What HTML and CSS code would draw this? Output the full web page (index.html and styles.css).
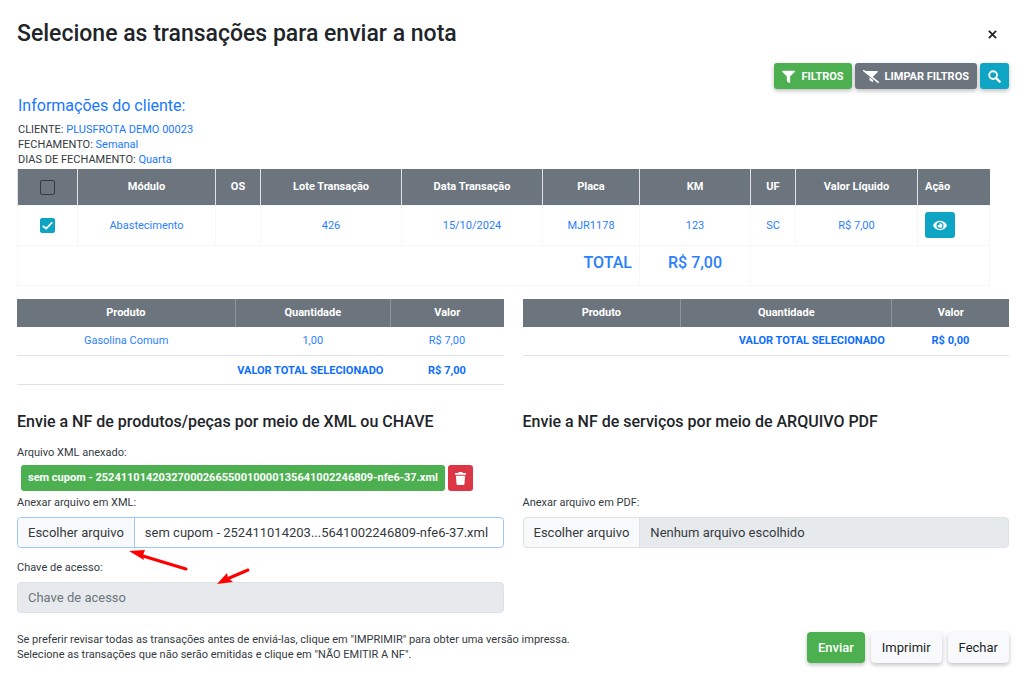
FILE: index.html
```html
<!DOCTYPE html>
<html lang="pt-BR">
<head>
  <meta charset="UTF-8">
  <meta name="viewport" content="width=device-width, initial-scale=1.0">
  <title>Enviar nota</title>
  <link rel="stylesheet" href="styles.css">
</head>
<body>
  <header class="modal-header">
    <h1>Selecione as transações para enviar a nota</h1>
    <button type="button" class="close" aria-label="Fechar janela">
      <svg viewBox="0 0 10 10" width="9" height="9"><path d="M1 1l8 8M9 1L1 9" stroke="#212529" stroke-width="2"/></svg>
    </button>
  </header>

  <div class="toolbar">
    <button type="button" class="btn-sm green shadow">
      <svg viewBox="0 0 512 512" width="13" height="13"><path fill="#fff" d="M488 32H24C3 32-8 58 7 73l185 185v174c0 8 4 15 10 20l80 56c16 11 38 0 38-20V258L505 73c15-15 4-41-17-41z"/></svg>
      FILTROS
    </button>
    <button type="button" class="btn-sm gray shadow">
      <svg viewBox="0 0 16 13" width="16" height="13"><path fill="#fff" d="M2 1h12c.8 0 1 .7.5 1.200L10 6.700v5.600l-3.500-2V6.700z"/><path d="M1 2l14 11" stroke="#6c757d" stroke-width="1.500"/><path d="M.7.700l14.600 11.600" stroke="#fff" stroke-width="1.500" stroke-linecap="round"/></svg>
      LIMPAR FILTROS
    </button>
    <button type="button" class="btn-sm teal shadow" aria-label="Pesquisar">
      <svg viewBox="0 0 14 14" width="13" height="13"><circle cx="5.500" cy="5.500" r="4.200" fill="none" stroke="#fff" stroke-width="2"/><path d="M8.500 8.500l4 4" stroke="#fff" stroke-width="2.500" stroke-linecap="round"/></svg>
    </button>
  </div>

  <main>
    <section class="client">
      <h2>Informações do cliente:</h2>
      <p>CLIENTE: <span>PLUSFROTA DEMO 00023</span></p>
      <p>FECHAMENTO: <span>Semanal</span></p>
      <p>DIAS DE FECHAMENTO: <span>Quarta</span></p>
    </section>

    <div class="table-wrap">
      <table class="transactions">
        <colgroup>
          <col class="c-check"><col class="c-modulo"><col class="c-os"><col class="c-lote"><col class="c-data">
          <col class="c-placa"><col class="c-km"><col class="c-uf"><col class="c-valor"><col class="c-acao">
        </colgroup>
        <thead>
          <tr>
            <th><input type="checkbox" class="check" aria-label="Selecionar todas"></th>
            <th>Módulo</th>
            <th>OS</th>
            <th>Lote Transação</th>
            <th>Data Transação</th>
            <th>Placa</th>
            <th>KM</th>
            <th>UF</th>
            <th>Valor Líquido</th>
            <th class="left">Ação</th>
          </tr>
        </thead>
        <tbody>
          <tr>
            <td><input type="checkbox" class="check" aria-label="Selecionar transação 426" checked></td>
            <td>Abastecimento</td>
            <td></td>
            <td>426</td>
            <td>15/10/2024</td>
            <td>MJR1178</td>
            <td>123</td>
            <td>SC</td>
            <td>R$ 7,00</td>
            <td class="left">
              <button type="button" class="btn-sm teal" aria-label="Visualizar">
                <svg viewBox="0 0 576 512" width="14" height="13"><path fill="#fff" d="M572 241C518 136 411 64 288 64S58 136 4 241a32 32 0 0 0 0 29c54 106 161 178 284 178s230-72 284-178a32 32 0 0 0 0-29zM288 400a144 144 0 1 1 0-288 144 144 0 0 1 0 288zm0-240a95 95 0 0 0-25 4 48 48 0 0 1-67 67 96 96 0 1 0 92-71z"/></svg>
              </button>
            </td>
          </tr>
          <tr class="total">
            <td colspan="6" class="right">TOTAL</td>
            <td>R$ 7,00</td>
            <td colspan="3"></td>
          </tr>
        </tbody>
      </table>
    </div>

    <div class="columns summaries">
      <table class="summary">
        <colgroup><col class="p-produto"><col class="p-qtd"><col class="p-valor"></colgroup>
        <thead>
          <tr><th>Produto</th><th>Quantidade</th><th>Valor</th></tr>
        </thead>
        <tbody>
          <tr><td>Gasolina Comum</td><td>1,00</td><td>R$ 7,00</td></tr>
          <tr class="selected"><td></td><td class="right">VALOR TOTAL SELECIONADO</td><td>R$ 7,00</td></tr>
        </tbody>
      </table>
      <table class="summary">
        <colgroup><col class="s-produto"><col class="s-qtd"><col class="s-valor"></colgroup>
        <thead>
          <tr><th>Produto</th><th>Quantidade</th><th>Valor</th></tr>
        </thead>
        <tbody>
          <tr class="selected"><td></td><td class="right">VALOR TOTAL SELECIONADO</td><td>R$ 0,00</td></tr>
        </tbody>
      </table>
    </div>

    <form id="notaForm">
      <div class="columns">
        <section class="upload">
          <h3>Envie a NF de produtos/peças por meio de XML ou CHAVE</h3>
          <p class="caption">Arquivo XML anexado:</p>
          <div class="attached">
            <span class="badge">sem cupom - 25241101420327000266550010000135641002246809-nfe6-37.xml</span>
            <button type="button" class="trash" aria-label="Excluir arquivo">
              <svg viewBox="0 0 12 14" width="11" height="13"><path fill="#fff" d="M0 1h3.500l.7-1h3.600l.7 1H12v2H0zM1 4h10l-.7 9c0 .6-.5 1-1 1H2.700c-.5 0-1-.4-1-1z"/></svg>
            </button>
          </div>
          <label class="caption" for="xml">Anexar arquivo em XML:</label>
          <label class="file focused">
            <input type="file" id="xml" accept=".xml">
            <span class="pick">Escolher arquivo</span>
            <span class="name">sem cupom - 252411014203...5641002246809-nfe6-37.xml</span>
            <svg class="arrows" viewBox="0 0 124 36" width="124" height="36">
              <path d="M14 6L57 19M119 20L98 29" stroke="#f00" stroke-width="3" stroke-linecap="round"/>
              <path fill="#f00" d="M0 1l16-1-2 5 1 5zM88 34l10-11 1 5 5 4z"/>
            </svg>
          </label>
          <label class="caption key-label" for="chave">Chave de acesso:</label>
          <input type="text" id="chave" class="key" placeholder="Chave de acesso" disabled>
        </section>

        <section class="upload services">
          <h3>Envie a NF de serviços por meio de ARQUIVO PDF</h3>
          <label class="caption" for="pdf">Anexar arquivo em PDF:</label>
          <label class="file disabled">
            <input type="file" id="pdf" accept=".pdf" disabled>
            <span class="pick">Escolher arquivo</span>
            <span class="name">Nenhum arquivo escolhido</span>
          </label>
        </section>
      </div>

      <footer>
        <p>Se preferir revisar todas as transações antes de enviá-las, clique em "IMPRIMIR" para obter uma versão impressa.<br>
          Selecione as transações que não serão emitidas e clique em "NÃO EMITIR A NF".</p>
        <div class="actions">
          <button type="submit" class="btn green">Enviar</button>
          <button type="button" class="btn light">Imprimir</button>
          <button type="button" class="btn light">Fechar</button>
        </div>
      </footer>
    </form>
  </main>
</body>
</html>
```
FILE: styles.css
```css
* {
  box-sizing: border-box;
}
body {
  font-family: Roboto, "Liberation Sans", sans-serif;
  font-size: 11px;
  line-height: 15px;
  margin: 0;
  padding: 18px 15px 16px 17px;
  background: #fff;
  color: #343a40;
}
h1, h2, h3, p {
  margin: 0;
}
button, input {
  font-family: inherit;
}
button {
  border: none;
  cursor: pointer;
}
svg {
  display: block;
}

.modal-header {
  display: flex;
  justify-content: space-between;
  align-items: center;
}
h1 {
  font-size: 23px;
  line-height: 32px;
  font-weight: 500;
  color: #212529;
}
.close {
  background: none;
  padding: 4px;
  margin-right: 8px;
}

.toolbar {
  display: flex;
  justify-content: flex-end;
  gap: 3px;
  margin-top: 13px;
}
.btn-sm {
  display: inline-flex;
  align-items: center;
  justify-content: center;
  gap: 6px;
  height: 26px;
  padding: 0 8px;
  border-radius: 3px;
  color: #fff;
  font-size: 11px;
  font-weight: 700;
}
.shadow {
  box-shadow: 0 2px 4px rgba(0,0,0,0.25);
}
.green {
  background: #4caf50;
  color: #fff;
}
.gray {
  background: #6c757d;
}
.teal {
  background: #0ea5c4;
}

.client {
  margin: 7px 0 2px;
  padding-left: 1px;
}
.client h2 {
  font-size: 16px;
  line-height: 20px;
  font-weight: 400;
  color: #1877ff;
  margin-bottom: 6px;
}
.client span {
  color: #1877ff;
}

table {
  width: 100%;
  table-layout: fixed;
  border-collapse: collapse;
  text-align: center;
  color: #2b7fff;
}
th {
  background: #6c757d;
  color: #fff;
  font-weight: 700;
  padding: 0;
}
td {
  padding: 0;
}
.left {
  text-align: left;
  padding-left: 7px;
}
.right {
  text-align: right;
  padding-right: 7px;
}

.table-wrap {
  padding: 0 20px 0 0;
}
.transactions th {
  height: 36px;
  border-left: 1px solid #dee2e6;
}
.transactions td {
  height: 40px;
  border: 1px solid #f6f7f8;
}
.transactions .btn-sm {
  width: 30px;
  vertical-align: middle;
}
.transactions .total td {
  font-size: 16px;
  font-weight: 500;
  line-height: 20px;
  vertical-align: top;
  padding-top: 7px;
}
.c-check { width: 60px; }
.c-modulo { width: 138px; }
.c-os { width: 45px; }
.c-lote { width: 141px; }
.c-data { width: 141px; }
.c-placa { width: 97px; }
.c-km { width: 111px; }
.c-uf { width: 45px; }
.c-valor { width: 122px; }
.c-acao { width: 72px; }

.check {
  appearance: none;
  width: 15px;
  height: 15px;
  margin: 0;
  border: 1px solid #343a40;
  border-radius: 2px;
  vertical-align: middle;
}
.check:checked {
  border-color: #0ea5c4;
  background: #0ea5c4 url("data:image/svg+xml,%3Csvg xmlns='http://www.w3.org/2000/svg' viewBox='0 0 15 15'%3E%3Cpath d='M2 8l4 3 7-7' fill='none' stroke='white' stroke-width='2'/%3E%3C/svg%3E") center / cover;
}

.columns {
  display: grid;
  grid-template-columns: minmax(0, 1fr) minmax(0, 1fr);
  gap: 19px;
  align-items: start;
}
.summaries {
  margin: 13px 0 26px;
}
.summary th {
  height: 28px;
}
.summary th + th {
  border-left: 1px solid #8d959c;
}
.summary td {
  height: 29px;
  border-bottom: 1px solid #dee2e6;
}
.summary .selected {
  color: #0d6efd;
  font-weight: 700;
}
.p-produto { width: 218px; }
.p-qtd { width: 155px; }
.p-valor { width: 113px; }
.s-produto { width: 158px; }
.s-qtd { width: 211px; }
.s-valor { width: 117px; }

.upload {
  display: flex;
  flex-direction: column;
}
h3 {
  font-size: 16px;
  line-height: 22px;
  font-weight: 500;
  color: #212529;
  margin-bottom: 12px;
}
.services h3 {
  margin-bottom: 62px;
}
.attached {
  display: flex;
  gap: 3px;
  margin: 5px 0 4px;
  padding-left: 4px;
}
.badge {
  min-width: 0;
  padding: 0 7px;
  border-radius: 3px;
  background: #4caf50;
  color: #fff;
  font-size: 11px;
  font-weight: 700;
  line-height: 26px;
  white-space: nowrap;
}
.trash {
  display: flex;
  align-items: center;
  justify-content: center;
  width: 25px;
  height: 26px;
  padding: 0;
  border-radius: 3px;
  background: #dc3545;
}
.file {
  position: relative;
  display: flex;
  height: 31px;
  margin-top: 7px;
  border: 1px solid #dee2e6;
  border-radius: 4px;
  font-size: 13px;
  line-height: 29px;
}
.file input {
  position: absolute;
  width: 100%;
  height: 100%;
  opacity: 0;
}
.pick {
  padding: 0 10px;
  border-right: 1px solid #dee2e6;
  border-radius: 4px 0 0 4px;
  background: #f8f9fa;
  white-space: nowrap;
}
.name {
  padding: 0 10px;
  white-space: nowrap;
}
.focused, .focused .pick {
  border-color: #9ec5fe;
}
.file.disabled {
  background: #e7eaed;
}
.arrows {
  position: absolute;
  left: 111px;
  top: 32px;
  pointer-events: none;
}
.key-label {
  margin-top: 12px;
}
.key {
  width: 100%;
  height: 31px;
  margin-top: 7px;
  padding: 0 10px;
  border: 1px solid #dee2e6;
  border-radius: 4px;
  background: #e7eaed;
  font-size: 13px;
}
.key::placeholder {
  color: #6c757d;
}

footer {
  display: flex;
  justify-content: space-between;
  align-items: flex-start;
  margin-top: 19px;
}
footer p {
  line-height: 15px;
}
.actions {
  display: flex;
  gap: 6px;
}
.btn {
  height: 31px;
  padding: 0 11px;
  border-radius: 4px;
  font-size: 13px;
  box-shadow: 0 2px 4px rgba(0,0,0,0.25);
}
.btn.green {
  font-weight: 500;
}
.light {
  background: #f8f9fa;
  color: #212529;
}
```
